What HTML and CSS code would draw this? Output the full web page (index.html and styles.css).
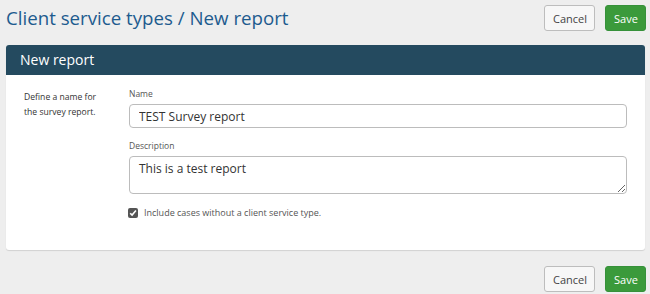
FILE: index.html
```html
<!DOCTYPE html>
<html>
<head>
<meta charset="utf-8">
<link rel="stylesheet" href="styles.css">
</head>
<body>
<div class="page">
  <div class="topbar">
    <h1 class="title">Client service types / New report</h1>
    <div class="actions">
      <button class="btn btn-cancel">Cancel</button>
      <button class="btn btn-save">Save</button>
    </div>
  </div>
  <div class="panel">
    <div class="panel-head">New report</div>
    <div class="panel-body">
      <div class="help">Define a name for the survey report.</div>
      <div class="fields">
        <label class="label">Name</label>
        <input class="input" type="text" value="TEST Survey report">
        <label class="label label-desc">Description</label>
        <textarea class="textarea">This is a test report</textarea>
        <label class="check">
          <span class="box"><svg width="8" height="8" viewBox="0 0 8 8"><path d="M1.2 4.2 L3.1 6.1 L6.9 1.6" fill="none" stroke="#fff" stroke-width="1.6"/></svg></span>
          <span>Include cases without a client service type.</span>
        </label>
      </div>
    </div>
  </div>
  <div class="bottombar">
    <button class="btn btn-cancel">Cancel</button>
    <button class="btn btn-save">Save</button>
  </div>
</div>
</body>
</html>
```
FILE: styles.css
```css
* { box-sizing: border-box; }
html, body { margin: 0; padding: 0; }
body {
  background: #eeeeee;
  font-family: "Open Sans", "Liberation Sans", sans-serif;
  color: #333;
  width: 650px;
  height: 294px;
  overflow: hidden;
}
.page { padding: 5px 4px 0 6px; }
.topbar {
  display: flex;
  justify-content: space-between;
  align-items: flex-start;
  height: 40px;
}
.title {
  margin: 0;
  font-weight: 400;
  font-size: 18.7px;
  line-height: 26px;
  color: #1d5b8e;
}
.actions, .bottombar {
  display: flex;
  gap: 10px;
}
.bottombar { justify-content: flex-end; margin-top: 16px; }
.btn {
  height: 26px;
  border-radius: 3px;
  font-family: inherit;
  font-size: 11px;
  padding: 0 8px;
  cursor: pointer;
}
.btn-cancel {
  width: 51px;
  background: #f7f7f7;
  border: 1px solid #bdbdbd;
  color: #444;
}
.btn-save {
  width: 41px;
  background: #3b9a3b;
  border: 1px solid #36913a;
  color: #fff;
}
.panel {
  width: 639px;
  background: #fff;
  border-radius: 3px;
  box-shadow: 0 1px 1px rgba(0,0,0,0.12);
}
.panel-head {
  background: #244a5f;
  color: #fff;
  height: 30px;
  line-height: 30px;
  padding-left: 14px;
  font-size: 14px;
  border-radius: 3px 3px 0 0;
}
.panel-body {
  display: flex;
  padding: 13px 18px 31px 18px;
}
.help {
  width: 105px;
  padding-right: 20px;
  font-size: 8.6px;
  line-height: 15px;
  color: #333;
  padding-top: 2px;
}
.fields {
  flex: 1;
  display: flex;
  flex-direction: column;
}
.label {
  font-size: 8.5px;
  color: #555;
  line-height: 12px;
  margin-bottom: 4px;
}
.label-desc { margin-top: 12px; }
.input, .textarea {
  width: 498px;
  border: 1px solid #bcbcbc;
  border-radius: 4px;
  font-family: inherit;
  font-size: 12px;
  color: #333;
  padding: 0 9px;
}
.input { height: 24px; }
.textarea {
  height: 38px;
  padding-top: 3px;
  resize: vertical;
}
.check {
  display: flex;
  align-items: center;
  gap: 6px;
  margin-top: 13px;
  font-size: 9px;
  line-height: 12px;
  color: #555;
  margin-left: -1px;
}
.box {
  width: 10px;
  height: 10px;
  background: #555;
  border-radius: 2px;
  display: flex;
  align-items: center;
  justify-content: center;
}
```
